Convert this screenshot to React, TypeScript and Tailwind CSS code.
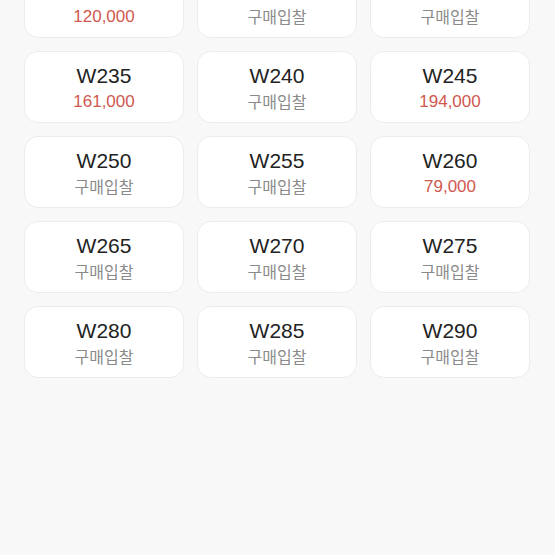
const sizes: { size: string; price?: string }[] = [
  { size: "W220", price: "120,000" },
  { size: "W225" },
  { size: "W230" },
  { size: "W235", price: "161,000" },
  { size: "W240" },
  { size: "W245", price: "194,000" },
  { size: "W250" },
  { size: "W255" },
  { size: "W260", price: "79,000" },
  { size: "W265" },
  { size: "W270" },
  { size: "W275" },
  { size: "W280" },
  { size: "W285" },
  { size: "W290" },
];

function SizeCard({ size, price }: { size: string; price?: string }) {
  return (
    <div className="flex h-[72px] flex-col items-center justify-center rounded-[14px] border border-[#ececec] bg-white">
      <div className="text-[21px] leading-[28px] text-[#222222] font-['Liberation_Sans',Arial,sans-serif]">
        {size}
      </div>
      {price ? (
        <div className="text-[17px] leading-[23px] text-[#d0584f] font-['Liberation_Sans',Arial,sans-serif]">
          {price}
        </div>
      ) : (
        <div className="text-[16px] leading-[23px] text-[#8a8a8a] font-['Noto_Sans_CJK_KR','Noto_Sans',sans-serif]">
          구매입찰
        </div>
      )}
    </div>
  );
}

export default function App() {
  return (
    <div className="h-[555px] w-full overflow-hidden bg-[#f8f8f8]">
      <div className="-mt-[34px] grid grid-cols-3 gap-[13px] pl-[24px] pr-[25px]">
        {sizes.map((s) => (
          <SizeCard key={s.size} size={s.size} price={s.price} />
        ))}
      </div>
    </div>
  );
}
